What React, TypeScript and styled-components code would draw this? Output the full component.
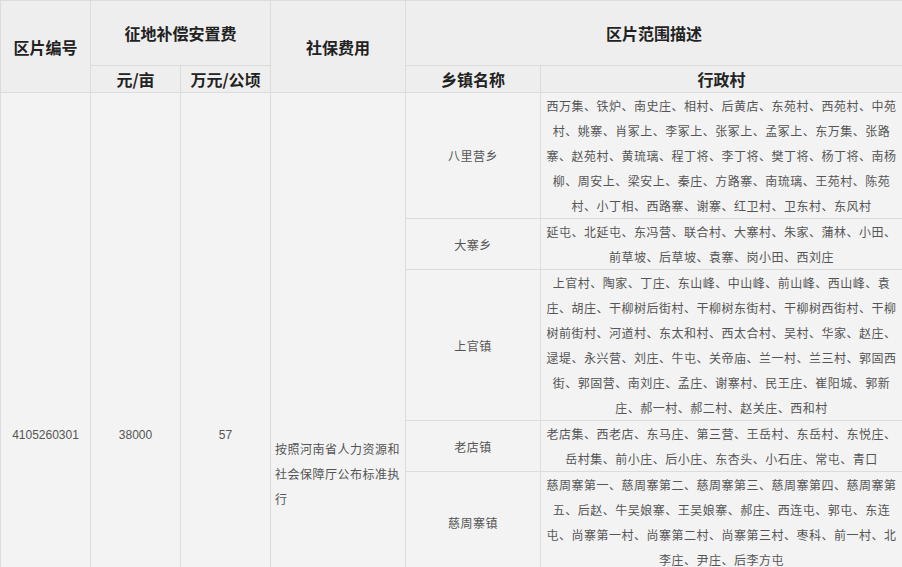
import React from "react";
import styled, { createGlobalStyle } from "styled-components";

const Global = createGlobalStyle`
  html, body { margin: 0; padding: 0; background: #fff; overflow: hidden; }
  body { font-family: "Liberation Sans", "Noto Sans CJK SC", sans-serif; }
`;

const Wrap = styled.div`
  width: 902px;
  height: 567px;
  overflow: hidden;
`;

const Table = styled.table`
  width: 902px;
  border-collapse: collapse;
  table-layout: fixed;
  background: #f3f3f3;
  color: #555;
`;

const Th = styled.th<{ $h?: number }>`
  background: #eeeeee;
  border: 1px solid #dcdcdc;
  font-family: "Noto Sans CJK SC", sans-serif;
  font-size: 16px;
  font-weight: bold;
  color: #222;
  height: ${(p) => p.$h ?? 26}px;
  padding: 0;
  text-align: center;
  vertical-align: middle;
`;

const Td = styled.td<{ $left?: boolean; $pad?: number }>`
  border: 1px solid #dcdcdc;
  font-family: "Noto Sans CJK SC", sans-serif;
  font-size: 12px;
  line-height: 25px;
  padding: ${(p) => p.$pad ?? 0}px 4px;
  text-align: ${(p) => (p.$left ? "left" : "center")};
  vertical-align: middle;
  letter-spacing: 0.5px;
`;

const Num = styled(Td)`
  font-family: "Liberation Sans", sans-serif;
  letter-spacing: 0;
`;

const rows: [string, string][] = [
  ["八里营乡", "西万集、铁炉、南史庄、相村、后黄店、东苑村、西苑村、中苑村、姚寨、肖冢上、李冢上、张冢上、孟冢上、东万集、张路寨、赵苑村、黄琉璃、程丁将、李丁将、樊丁将、杨丁将、南杨柳、周安上、梁安上、秦庄、方路寨、南琉璃、王苑村、陈苑村、小丁相、西路寨、谢寨、红卫村、卫东村、东风村"],
  ["大寨乡", "延屯、北延屯、东冯营、联合村、大寨村、朱家、蒲林、小田、前草坡、后草坡、袁寨、岗小田、西刘庄"],
  ["上官镇", "上官村、陶家、丁庄、东山峰、中山峰、前山峰、西山峰、袁庄、胡庄、干柳树后街村、干柳树东街村、干柳树西街村、干柳树前街村、河道村、东太和村、西太合村、吴村、华家、赵庄、逯堤、永兴营、刘庄、牛屯、关帝庙、兰一村、兰三村、郭固西街、郭固营、南刘庄、孟庄、谢寨村、民王庄、崔阳城、郭新庄、郝一村、郝二村、赵关庄、西和村"],
  ["老店镇", "老店集、西老店、东马庄、第三营、王岳村、东岳村、东悦庄、岳村集、前小庄、后小庄、东杏头、小石庄、常屯、青口"],
  ["慈周寨镇", "慈周寨第一、慈周寨第二、慈周寨第三、慈周寨第四、慈周寨第五、后赵、牛吴娘寨、王吴娘寨、郝庄、西连屯、郭屯、东连屯、尚寨第一村、尚寨第二村、尚寨第三村、枣科、前一村、北李庄、尹庄、后李方屯"],
  ["其他乡镇", "其他村、其他村、其他村、其他村、其他村、其他村、其他村、其他村、其他村、其他村、其他村、其他村、其他村、其他村、其他村、其他村、其他村、其他村、其他村、其他村、其他村、其他村、其他村、其他村、其他村、其他村、其他村、其他村、其他村、其他村、其他村、其他村、其他村、其他村、其他村、其他村、其他村、其他村、其他村、其他村、其他村、其他村、其他村、其他村"],
];

export default function App() {
  return (
    <Wrap>
      <Global />
      <Table>
        <colgroup>
          <col style={{ width: 90 }} />
          <col style={{ width: 90 }} />
          <col style={{ width: 90 }} />
          <col style={{ width: 135 }} />
          <col style={{ width: 135 }} />
          <col style={{ width: 362 }} />
        </colgroup>
        <thead>
          <tr>
            <Th rowSpan={2}>区片编号</Th>
            <Th colSpan={2} $h={64}>征地补偿安置费</Th>
            <Th rowSpan={2}>社保费用</Th>
            <Th colSpan={2} $h={64}>区片范围描述</Th>
          </tr>
          <tr>
            <Th>元/亩</Th>
            <Th>万元/公顷</Th>
            <Th>乡镇名称</Th>
            <Th>行政村</Th>
          </tr>
        </thead>
        <tbody>
          {rows.map(([town, villages], i) => (
            <tr key={town}>
              {i === 0 && (
                <>
                  <Num rowSpan={rows.length}>4105260301</Num>
                  <Num rowSpan={rows.length}>38000</Num>
                  <Num rowSpan={rows.length}>57</Num>
                  <Td rowSpan={rows.length + 1} $left>按照河南省人力资源和社会保障厅公布标准执行</Td>
                </>
              )}
              <Td>{town}</Td>
              <Td $pad={i === rows.length - 1 ? 15 : 0}>{villages}</Td>
            </tr>
          ))}
          <tr>
            <Num>4105260302</Num>
            <Num>36000</Num>
            <Num>54</Num>
            <Td>其他乡</Td>
            <Td>其他村、其他村、其他村、其他村、其他村、其他村、其他村、其他村、其他村、其他村、其他村、其他村、其他村、其他村、其他村、其他村</Td>
          </tr>
        </tbody>
      </Table>
    </Wrap>
  );
}
